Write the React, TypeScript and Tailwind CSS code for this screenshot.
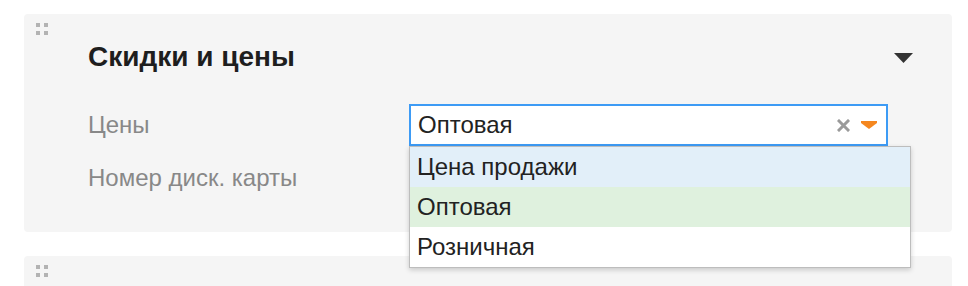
const options = [
  { label: "Цена продажи", bg: "bg-[#e2eff9]" },
  { label: "Оптовая", bg: "bg-[#dff1de]" },
  { label: "Розничная", bg: "bg-white" },
];

function DragHandle() {
  return (
    <div className="absolute left-[12px] top-[9px] grid grid-cols-2 gap-[4px]">
      <span className="h-[4px] w-[4px] bg-[#b3b3b3]" />
      <span className="h-[4px] w-[4px] bg-[#b3b3b3]" />
      <span className="h-[4px] w-[4px] bg-[#b3b3b3]" />
      <span className="h-[4px] w-[4px] bg-[#b3b3b3]" />
    </div>
  );
}

export default function App() {
  return (
    <div
      className="h-[286px] overflow-hidden bg-white pl-[24px] pr-[16px] pt-[14px] text-[#222]"
      style={{ fontFamily: '"Liberation Sans", Arial, sans-serif' }}
    >
      <section className="relative h-[218px] rounded-[4px] bg-[#f5f5f5] pl-[64px] pr-[39px] pt-[29px]">
        <DragHandle />
        <header className="flex h-[28px] items-center justify-between">
          <h2 className="text-[28px] font-bold leading-[28px] text-[#1e1e1e]">Скидки и цены</h2>
          <svg width="19" height="10" viewBox="0 0 19 10" className="mt-[1px]">
            <polygon points="0,0 19,0 9.5,10" fill="#333" />
          </svg>
        </header>

        <div className="mt-[33px] grid gap-[11px]">
          <div className="flex h-[42px] items-center">
            <label className="w-[321px] text-[24px] text-[#888]">Цены</label>
            <div className="relative">
              <div className="flex h-[42px] w-[479px] items-center border-2 border-[#3d9bf5] bg-white pl-[7px] pr-[9px]">
                <span className="flex-1 text-[24px] text-[#222]">Оптовая</span>
                <svg width="13" height="13" viewBox="0 0 13 13" className="mr-[11px]">
                  <path d="M2 2 L11 11 M11 2 L2 11" stroke="#9a9a9a" strokeWidth="3" strokeLinecap="square" />
                </svg>
                <svg width="16" height="8" viewBox="0 0 16 8">
                  <polygon points="0,0 16,0 16,2 8,8 0,2" fill="#f5871f" />
                </svg>
              </div>
              <ul className="absolute left-0 top-[42px] z-10 w-[502px] border border-[#bdbdbd] bg-white shadow-[0_2px_5px_rgba(0,0,0,0.18)]">
                {options.map((o) => (
                  <li key={o.label} className={`flex h-[40px] items-center px-[7px] text-[24px] text-[#222] ${o.bg}`}>
                    {o.label}
                  </li>
                ))}
              </ul>
            </div>
          </div>
          <div className="flex h-[42px] items-center">
            <label className="w-[321px] text-[24px] text-[#888]">Номер диск. карты</label>
            <div className="h-[42px] w-[479px] border border-[#ddd] bg-white" />
          </div>
        </div>
      </section>

      <section className="relative mt-[24px] h-[60px] rounded-[4px] bg-[#f5f5f5]">
        <DragHandle />
      </section>
    </div>
  );
}
